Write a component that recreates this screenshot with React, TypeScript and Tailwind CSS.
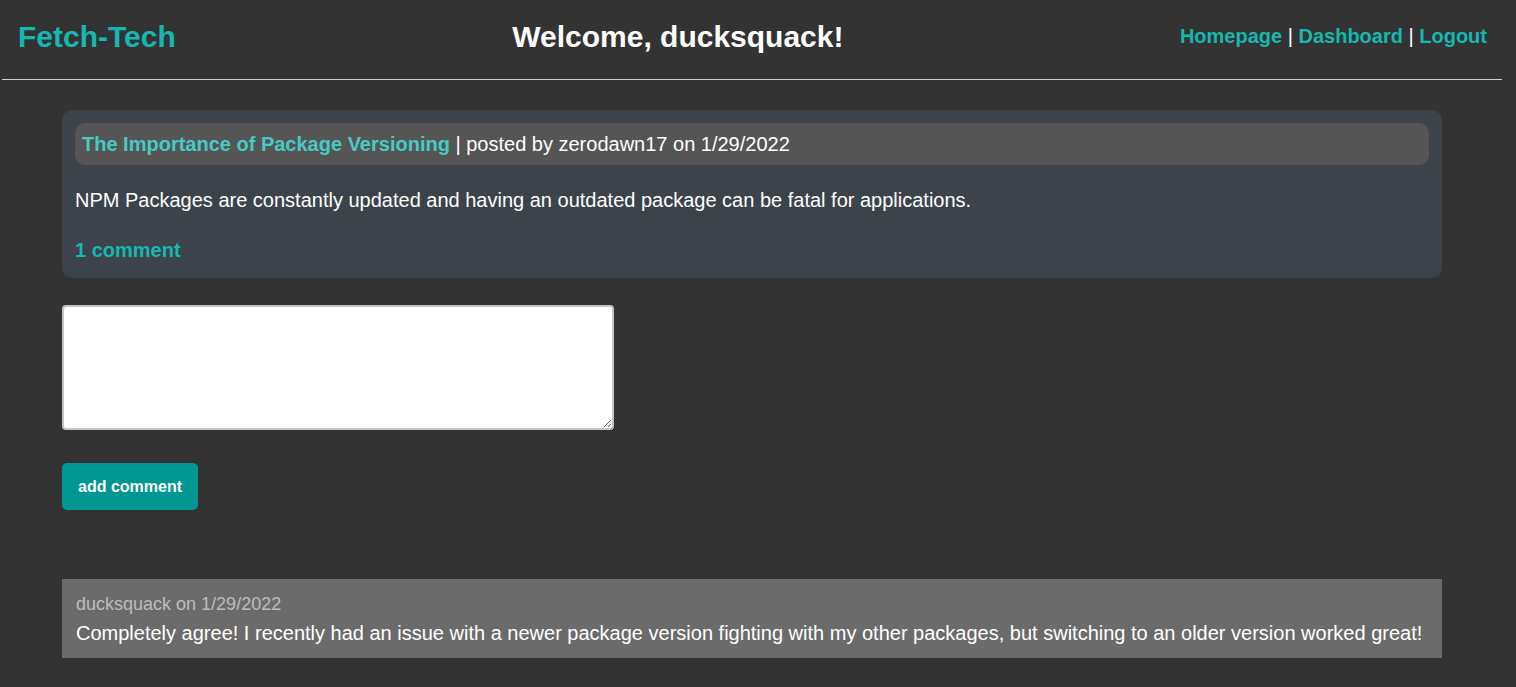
import React from 'react';

const post = {
  title: 'The Importance of Package Versioning',
  author: 'zerodawn17',
  date: '1/29/2022',
  body: 'NPM Packages are constantly updated and having an outdated package can be fatal for applications.',
};

const comments = [
  {
    author: 'ducksquack',
    date: '1/29/2022',
    text: 'Completely agree! I recently had an issue with a newer package version fighting with my other packages, but switching to an older version worked great!',
  },
];

export default function App() {
  return (
    <div className="min-h-screen bg-[#333333] font-['Liberation_Sans',Arial,sans-serif] text-white">
      {/* header */}
      <header className="mx-[2px] flex h-[80px] w-[1500px] items-center justify-between border-b border-[#cfcfcf] pl-[16px] pr-[15px] pb-[7px]">
        <a href="#" className="text-[30px] font-bold text-[#15b8b0]">
          Fetch-Tech
        </a>
        <h1 className="text-[30px] font-bold">Welcome, ducksquack!</h1>
        <nav className="text-[20px] font-bold">
          <a href="#" className="text-[#15b8b0]">Homepage</a>
          <span className="font-normal"> | </span>
          <a href="#" className="text-[#15b8b0]">Dashboard</a>
          <span className="font-normal"> | </span>
          <a href="#" className="text-[#15b8b0]">Logout</a>
        </nav>
      </header>

      <main className="mx-[62px] w-[1380px] pt-[30px]">
        {/* post */}
        <article className="rounded-[10px] bg-[#3c434b] px-[13px] pt-[13px] pb-[16px] text-[20px]">
          <div className="flex h-[42px] items-center rounded-[10px] bg-[#555555] px-[7px]">
            <a href="#" className="font-bold text-[#45cbc2]">{post.title}</a>
            <span className="whitespace-pre"> | posted by {post.author} on {post.date}</span>
          </div>
          <p className="mt-[24px] leading-[23px]">{post.body}</p>
          <a href="#" className="mt-[27px] block leading-[23px] font-bold text-[#15b8b0]">
            1 comment
          </a>
        </article>

        {/* new comment */}
        <form className="mt-[27px]">
          <textarea className="block h-[125px] w-[552px] resize rounded-[4px] border-2 border-[#c4c4c4] bg-white text-black" />
          <button
            type="submit"
            className="mt-[33px] h-[47px] w-[136px] rounded-[5px] bg-[#009691] text-[16px] font-bold text-white"
          >
            add comment
          </button>
        </form>

        {/* comments */}
        <section className="mt-[69px]">
          {comments.map((c, i) => (
            <div key={i} className="h-[79px] bg-[#6b6b6b] px-[14px] pt-[15px]">
              <p className="text-[18px] leading-[21px] text-[#bdbdbd]">
                {c.author} on {c.date}
              </p>
              <p className="mt-[7px] text-[20px] leading-[23px]">{c.text}</p>
            </div>
          ))}
        </section>
      </main>
    </div>
  );
}
